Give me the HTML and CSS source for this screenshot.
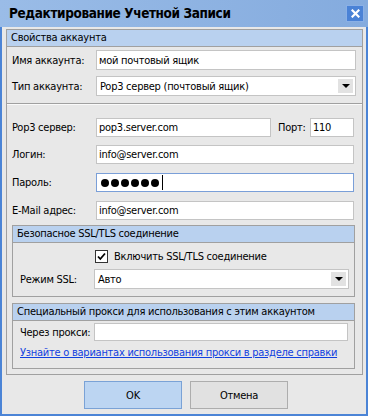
FILE: index.html
```html
<!DOCTYPE html>
<html lang="ru">
<head>
  <meta charset="UTF-8">
  <title>Редактирование Учетной Записи</title>
  <link rel="stylesheet" href="styles.css">
</head>
<body>
  <div class="window">
    <div class="titlebar">
      <span class="title">Редактирование Учетной Записи</span>
      <span class="close">
        <svg viewBox="0 0 9 9" width="9" height="9">
          <path d="M1.5,1.5 L7.5,7.5 M7.5,1.5 L1.5,7.5" stroke="#fff" stroke-width="2.2" stroke-linecap="square"/>
        </svg>
      </span>
    </div>

    <div class="client">
      <div class="frame">
        <div class="caption">Свойства аккаунта</div>

        <div class="row r-name">
          <span class="label">Имя аккаунта:</span>
          <div class="field wide">мой почтовый ящик</div>
        </div>
        <div class="row r-type">
          <span class="label">Тип аккаунта:</span>
          <div class="field select wide">
            <span>Pop3 сервер (почтовый ящик)</span>
            <span class="arrow"></span>
          </div>
        </div>

        <div class="sep"></div>

        <div class="row r-server">
          <span class="label">Pop3 сервер:</span>
          <div class="field server">pop3.server.com</div>
          <span class="port-label">Порт:</span>
          <div class="field port">110</div>
        </div>
        <div class="row r-login">
          <span class="label">Логин:</span>
          <div class="field normal">info@server.com</div>
        </div>
        <div class="row r-pass">
          <span class="label">Пароль:</span>
          <div class="field normal focused">
            <span class="dots"><i></i><i></i><i></i><i></i><i></i><i></i></span>
            <span class="caret"></span>
          </div>
        </div>
        <div class="row r-email">
          <span class="label">E-Mail адрес:</span>
          <div class="field normal">info@server.com</div>
        </div>

        <!-- SSL -->
        <div class="group ssl">
          <div class="caption">Безопасное SSL/TLS соединение</div>
          <div class="check-row">
            <span class="checkbox">
              <svg viewBox="0 0 11 11" width="11" height="11">
                <path d="M2,5.5 L4.3,8 L9,2.5" stroke="#000" stroke-width="1.8" fill="none"/>
              </svg>
            </span>
            <span>Включить SSL/TLS соединение</span>
          </div>
          <div class="row inner">
            <span class="label short">Режим SSL:</span>
            <div class="field select mode">
              <span>Авто</span>
              <span class="arrow"></span>
            </div>
          </div>
        </div>

        <!-- Proxy -->
        <div class="group proxy">
          <div class="caption">Специальный прокси для использования с этим аккаунтом</div>
          <div class="row inner">
            <span class="label short">Через прокси:</span>
            <div class="field proxy-field"></div>
          </div>
          <a class="help" href="#">Узнайте о вариантах использования прокси в разделе справки</a>
        </div>
      </div>

      <div class="buttons">
        <button class="btn default">OK</button>
        <button class="btn">Отмена</button>
      </div>
    </div>
  </div>
</body>
</html>
```

FILE: styles.css
```css
* {
  box-sizing: border-box;
}
body {
  margin: 0;
  font-family: "DejaVu Sans Condensed", "DejaVu Sans", sans-serif;
  font-size: 11px;
  letter-spacing: -0.25px;
  color: #000;
}
.window {
  width: 368px;
  height: 416px;
  display: flex;
  flex-direction: column;
  background: #4b84d6;
}
.titlebar {
  height: 27px;
  flex: none;
  display: flex;
  align-items: center;
  padding-left: 9px;
  background: linear-gradient(to right, #9abce7, #84abde);
  position: relative;
}
.title {
  font-weight: bold;
  font-size: 13.5px;
  letter-spacing: -0.4px;
  margin-top: -1px;
}
.close {
  position: absolute;
  left: 346px;
  top: 5px;
  width: 18px;
  height: 17px;
  background: #4a82d6;
  border: 1px solid #8ab0e6;
  display: flex;
  align-items: center;
  justify-content: center;
}
.client {
  flex: 1;
  margin: 0 2px 2px 2px;
  background: #e8e8e8;
  display: flex;
  flex-direction: column;
}
.frame {
  margin: 2px 0 0 4px;
  width: 357px;
  height: 346px;
  border: 1px solid #a0a0a0;
  display: flex;
  flex-direction: column;
}
.caption {
  height: 17px;
  line-height: 16px;
  padding-left: 4px;
  background: #b9d1ef;
  border-bottom: 1px solid #a0a0a0;
  white-space: nowrap;
}
.row {
  display: flex;
  align-items: center;
  padding-left: 5px;
}
.label {
  width: 84px;
  flex: none;
}
.field {
  height: 19px;
  background: #fff;
  border: 1px solid #c4c4c4;
  padding-left: 2px;
  line-height: 17px;
  white-space: nowrap;
  display: flex;
  align-items: center;
}
.wide {
  width: 260px;
  height: 20px;
}
.normal {
  width: 258px;
}
.select {
  justify-content: space-between;
  padding-left: 3px;
  padding-right: 2px;
}
.arrow {
  width: 15px;
  height: 14px;
  background: #e2e2e2;
  position: relative;
}
.arrow::after {
  content: "";
  position: absolute;
  left: 4px;
  top: 5px;
  border-left: 4px solid transparent;
  border-right: 4px solid transparent;
  border-top: 4px solid #000;
}
.r-name { margin-top: 3px; }
.r-type { margin-top: 6px; }
.sep {
  margin-top: 7px;
  height: 2px;
  border-top: 1px solid #a0a0a0;
  border-bottom: 1px solid #fafafa;
}
.r-server { margin-top: 13px; }
.r-login { margin-top: 8px; }
.r-pass { margin-top: 9px; }
.r-email { margin-top: 9px; }
.server {
  width: 175px;
}
.port-label {
  margin-left: 7px;
  width: 32px;
}
.port {
  width: 44px;
}
.focused {
  border-color: #7a9fd8;
  padding-left: 4px;
}
.dots {
  display: flex;
  gap: 2px;
}
.dots i {
  width: 8px;
  height: 8px;
  border-radius: 50%;
  background: #000;
}
.caret {
  width: 1px;
  height: 15px;
  background: #000;
  margin-left: 3px;
}
.group {
  margin-left: 5px;
  width: 343px;
  border: 1px solid #a0a0a0;
}
.ssl {
  margin-top: 5px;
  height: 72px;
}
.proxy {
  margin-top: 6px;
  height: 66px;
}
.check-row {
  margin-top: 7px;
  padding-left: 82px;
  height: 13px;
  display: flex;
  align-items: center;
  gap: 6px;
}
.checkbox {
  width: 13px;
  height: 13px;
  background: #fff;
  border: 1px solid #333;
  display: flex;
}
.inner {
  padding-left: 7px;
}
.short {
  width: 74px;
}
.ssl .inner {
  margin-top: 6px;
}
.mode {
  width: 255px;
  height: 20px;
}
.proxy .inner {
  margin-top: 2px;
}
.proxy-field {
  width: 254px;
  height: 18px;
}
.help {
  display: block;
  margin: 5px 0 0 7px;
  color: #1040e0;
  white-space: nowrap;
}
.buttons {
  display: flex;
  gap: 8px;
  padding-left: 82px;
  margin-top: 6px;
}
.btn {
  width: 98px;
  height: 28px;
  font-family: inherit;
  font-size: 11px;
  letter-spacing: inherit;
  color: #000;
  background: #e1e1e1;
  border: 1px solid #adadad;
  padding: 0;
}
.btn.default {
  background: #bcd5f2;
  border-color: #7aa2d6;
}
```
